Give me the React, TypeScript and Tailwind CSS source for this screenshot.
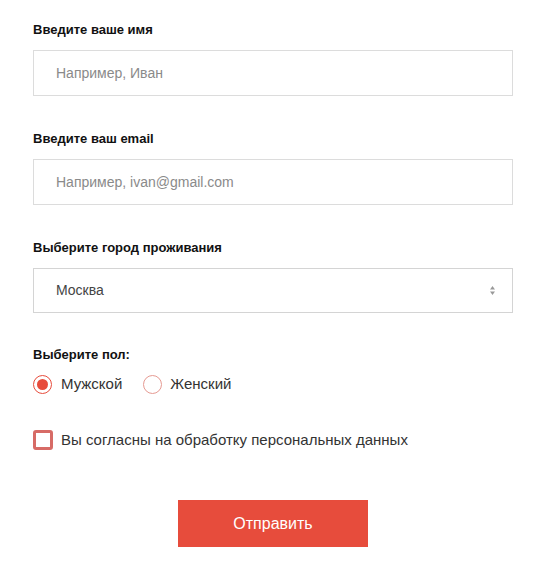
import React from 'react';

const font = { fontFamily: '"Liberation Sans", Arial, sans-serif' };

const Label: React.FC<{ children: React.ReactNode }> = ({ children }) => (
    <div className="h-5 leading-5 text-[13px] font-bold text-[#111]">{children}</div>
);

export default function App() {
    return (
        <div className="w-[544px] h-[580px] bg-white" style={font}>
            <div className="pl-[33px] pr-[31px] pt-[20px]">
                <Label>Введите ваше имя</Label>
                <div className="mt-[10px] h-[46px] border border-[#dcdcdc] flex items-center pl-[22px] text-[14px] text-[#8a8a8a]">
                    Например, Иван
                </div>

                <div className="mt-[33px]">
                    <Label>Введите ваш email</Label>
                </div>
                <div className="mt-[10px] h-[46px] border border-[#dcdcdc] flex items-center pl-[22px] text-[14px] text-[#8a8a8a]">
                    Например, ivan@gmail.com
                </div>

                <div className="mt-[33px]">
                    <Label>Выберите город проживания</Label>
                </div>
                <div className="mt-[10px] h-[45px] border border-[#d4d4d4] flex items-center justify-between pl-[22px] pr-[16px] text-[14px] text-[#444]">
                    <span>Москва</span>
                    <svg width="7" height="11" viewBox="0 0 7 11">
                        <path d="M3.5 1 L6 4.5 L1 4.5 Z" fill="#999" />
                        <path d="M3.5 10 L6 6.5 L1 6.5 Z" fill="#999" />
                    </svg>
                </div>

                <div className="mt-[32px]">
                    <Label>Выберите пол:</Label>
                </div>
                <div className="mt-[9px] flex items-center h-[20px] text-[15px] text-[#333]">
                    <span className="w-[19px] h-[19px] rounded-full border-[1.5px] border-[#e74c3c] flex items-center justify-center">
                        <span className="w-[11px] h-[11px] rounded-full bg-[#e74c3c]" />
                    </span>
                    <span className="ml-[9px]">Мужской</span>
                    <span className="ml-[21px] w-[19px] h-[19px] rounded-full border-[1.5px] border-[#e69a92]" />
                    <span className="ml-[8px]">Женский</span>
                </div>

                <div className="mt-[36px] flex items-center h-[20px] text-[15px] text-[#333]">
                    <span className="w-[20px] h-[20px] rounded-[3px] border-[3px] border-[#d76b66]" />
                    <span className="ml-[8px]">Вы согласны на обработку персональных данных</span>
                </div>

                <div className="mt-[50px] flex justify-center">
                    <div className="w-[190px] h-[47px] bg-[#e74c3c] text-white text-[16px] flex items-center justify-center">
                        Отправить
                    </div>
                </div>
            </div>
        </div>
    );
}
